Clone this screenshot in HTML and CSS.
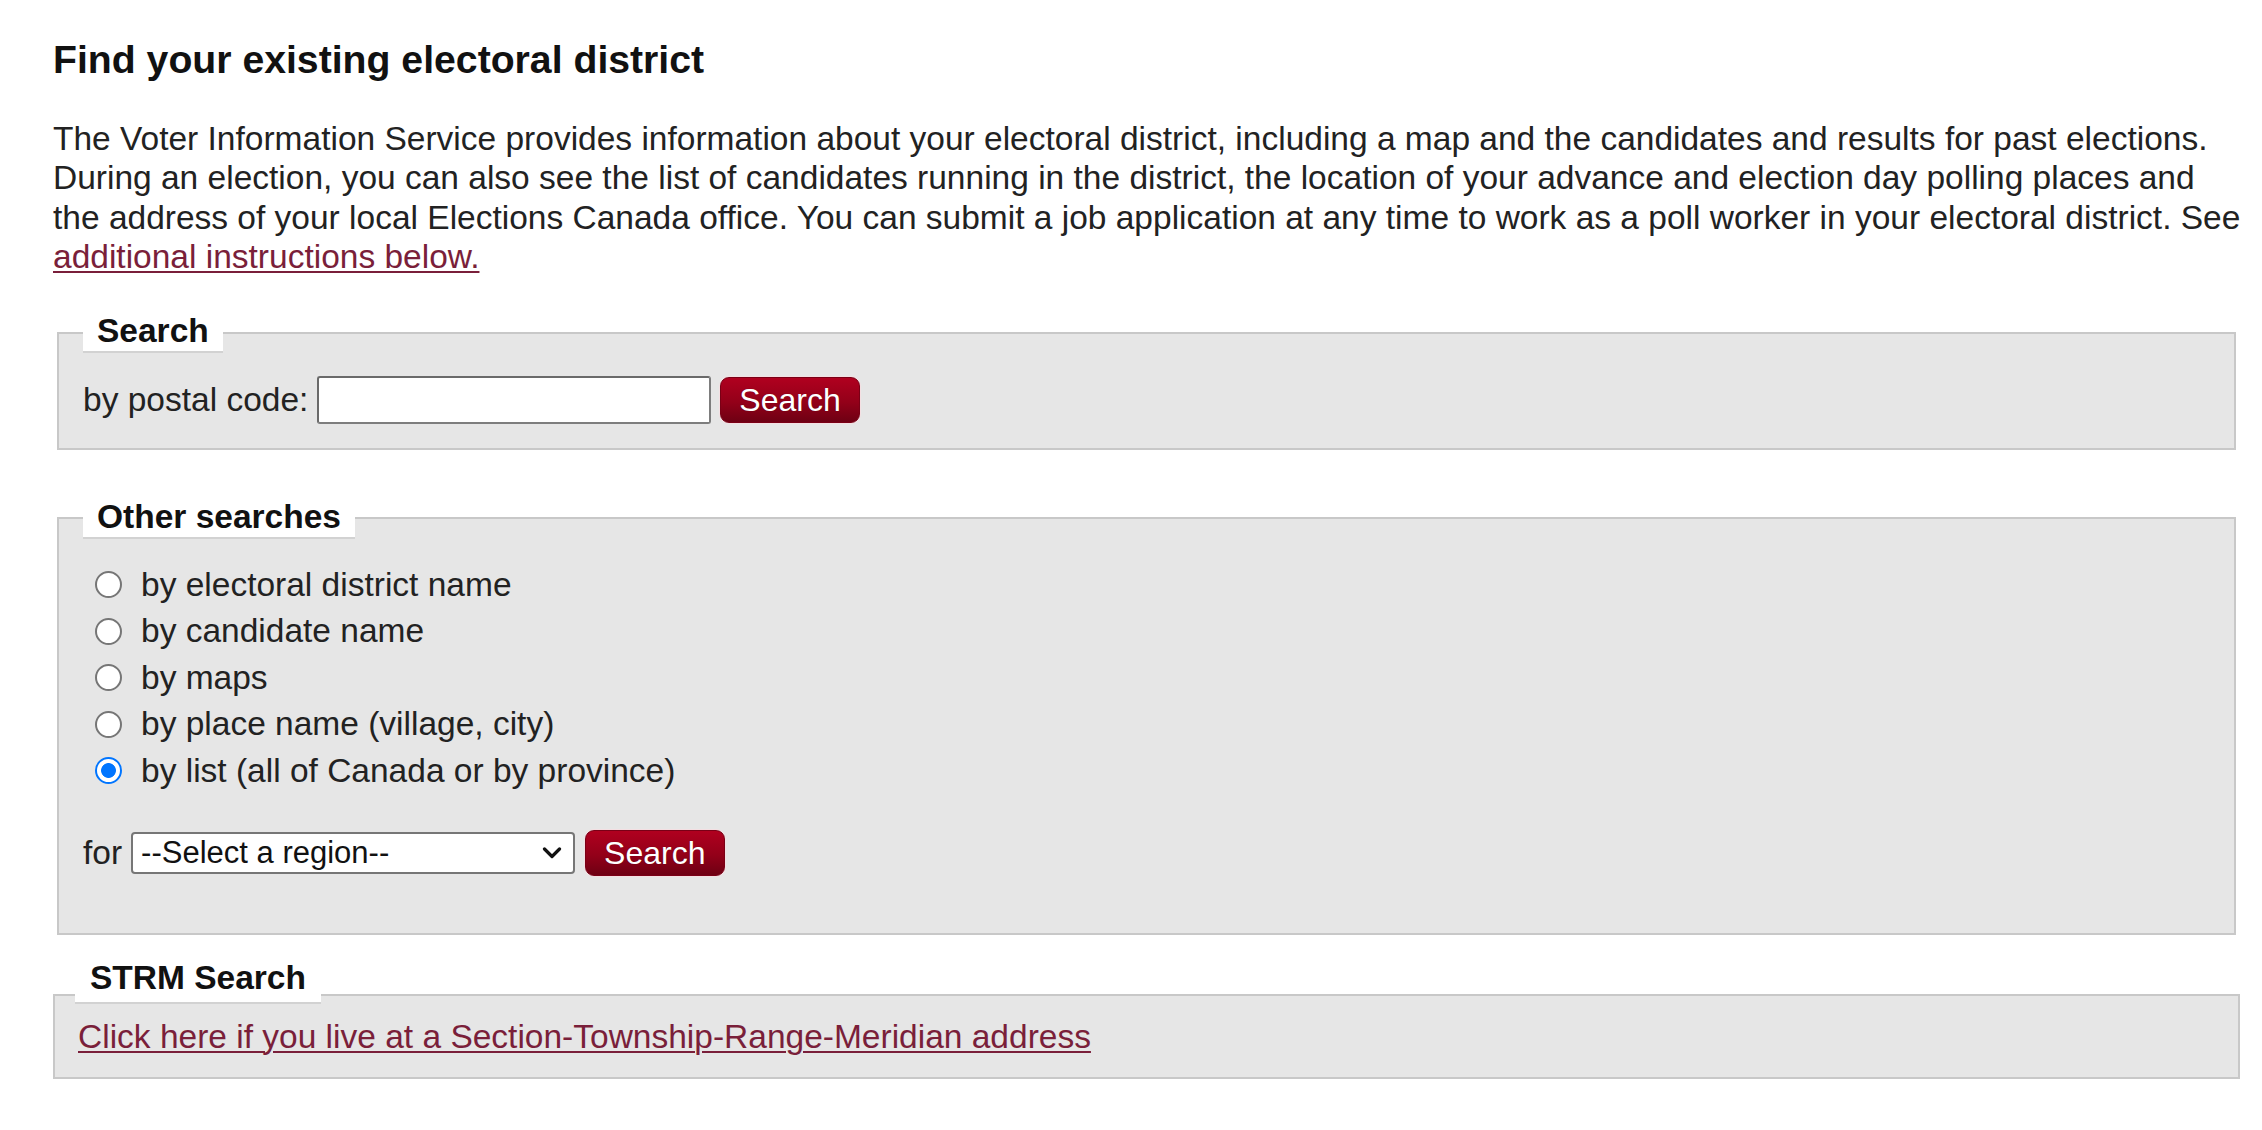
FILE: index.html
```html
<!DOCTYPE html>
<html lang="en">
<head>
<meta charset="utf-8">
<title>Find your existing electoral district</title>
<link rel="stylesheet" href="styles.css">
</head>
<body>
<main class="page">
  <h2 class="title">Find your existing electoral district</h2>
  <p class="intro">The Voter Information Service provides information about your electoral district, including a map and the candidates and results for past elections.<br>During an election, you can also see the list of candidates running in the district, the location of your advance and election day polling places and<br>the address of your local Elections Canada office. You can submit a job application at any time to work as a poll worker in your electoral district. See<br><a href="#instructions" class="link">additional instructions below.</a></p>

  <fieldset class="box box-search">
    <legend class="legend">Search</legend>
    <div class="row">
      <label class="row-label" for="postal">by postal code:</label>
      <input id="postal" class="text-input" type="text">
      <button class="btn" type="button">Search</button>
    </div>
  </fieldset>

  <fieldset class="box box-other">
    <legend class="legend">Other searches</legend>
    <ul class="options">
      <li class="option"><input class="radio" type="radio" name="type" id="r1"><label for="r1">by electoral district name</label></li>
      <li class="option"><input class="radio" type="radio" name="type" id="r2"><label for="r2">by candidate name</label></li>
      <li class="option"><input class="radio" type="radio" name="type" id="r3"><label for="r3">by maps</label></li>
      <li class="option"><input class="radio" type="radio" name="type" id="r4"><label for="r4">by place name (village, city)</label></li>
      <li class="option"><input class="radio" type="radio" name="type" id="r5" checked><label for="r5">by list (all of Canada or by province)</label></li>
    </ul>
    <div class="row">
      <label class="row-label-short" for="region">for</label>
      <span class="select-wrap">
        <select id="region" class="select"><option>--Select a region--</option></select>
        <svg class="chev" width="20" height="12" viewBox="0 0 20 12" aria-hidden="true"><path d="M2.5 2 L10 9.5 L17.5 2" fill="none" stroke="#111" stroke-width="3.2" stroke-linecap="round" stroke-linejoin="round"/></svg>
      </span>
      <button class="btn" type="button">Search</button>
    </div>
  </fieldset>

  <section class="strm">
    <h3 class="strm-title">STRM Search</h3>
    <div class="strm-body">
      <a href="#strm" class="link">Click here if you live at a Section-Township-Range-Meridian address</a>
    </div>
  </section>
</main>
</body>
</html>
```

FILE: styles.css
```css
html, body {
  margin: 0;
  background: #ffffff;
}

body {
  font-family: "Liberation Sans", Arial, sans-serif;
  font-size: 33.5px;
  color: #222222;
}

.page {
  padding: 37px 0 40px 53px;
}

.title {
  margin: 0;
  font-size: 39.2px;
  line-height: 45px;
  font-weight: bold;
  color: #111111;
}

.intro {
  margin: 37px 0 0;
  line-height: 39.3px;
}

.link {
  color: #7a1f3a;
  text-decoration: underline;
  text-decoration-thickness: 2px;
  text-underline-offset: 3px;
}

.box {
  margin: 36px 26px 0 4px;
  padding: 23px 24px 24px;
  border: 2px solid #c8c8c8;
  background: #e6e6e6;
  min-width: 0;
}

.box-other {
  margin-top: 47.5px;
  padding-bottom: 56px;
}

.legend {
  padding: 0 14px 1px;
  line-height: 38px;
  font-weight: bold;
  color: #111111;
  background: #ffffff;
  border-bottom: 2px solid #d2d2d2;
}

.row {
  display: flex;
  align-items: center;
  height: 48px;
}

.row-label {
  margin-right: 9px;
}

.row-label-short {
  margin-right: 9px;
}

.text-input {
  box-sizing: border-box;
  width: 394px;
  height: 48px;
  margin: 0 9px 0 0;
  padding: 0 8px;
  border: 2px solid #7d7d7d;
  border-top-color: #6a6a6a;
  border-left-color: #6a6a6a;
  border-radius: 3px;
  background: #ffffff;
  font: inherit;
}

.btn {
  box-sizing: border-box;
  height: 46px;
  padding: 0 18px;
  border: 1px solid #7a0016;
  border-radius: 9px;
  background: linear-gradient(#b0001f, #930019 55%, #6e0013);
  box-shadow: 0 0 0 1px #f4dfe2;
  color: #ffffff;
  font-family: "Liberation Sans", Arial, sans-serif;
  font-size: 32px;
  line-height: 1;
  text-shadow: 0 0 1px rgba(0, 0, 0, 0.35);
  cursor: pointer;
}

.options {
  list-style: none;
  margin: 0 0 34.5px;
  padding: 0;
}

.option {
  display: flex;
  align-items: center;
  height: 46.5px;
}

.radio {
  appearance: none;
  -webkit-appearance: none;
  box-sizing: border-box;
  flex: none;
  width: 27px;
  height: 27px;
  margin: 0 19px 0 12px;
  border: 2px solid #767676;
  border-radius: 50%;
  background: #ffffff;
}

.radio:checked {
  border-color: #0075ff;
  background: radial-gradient(circle, #0075ff 0 7px, #ffffff 7.8px);
}

.select-wrap {
  position: relative;
  display: block;
  margin-right: 10px;
}

.select {
  appearance: none;
  -webkit-appearance: none;
  box-sizing: border-box;
  display: block;
  width: 444px;
  height: 42px;
  margin: 0;
  padding: 0 40px 0 8px;
  border: 2px solid #767676;
  border-radius: 4px;
  background: #ffffff;
  color: #111111;
  font-family: "Liberation Sans", Arial, sans-serif;
  font-size: 31px;
}

.chev {
  position: absolute;
  right: 13px;
  top: 15px;
  pointer-events: none;
}

.strm {
  margin: 24px 22px 0 0;
}

.strm-title {
  position: relative;
  z-index: 1;
  width: fit-content;
  margin: 0 0 -10px 22px;
  padding: 0 15px 4.5px;
  font-size: 33.5px;
  line-height: 38.5px;
  font-weight: bold;
  color: #111111;
  background: #ffffff;
  border-bottom: 2px solid #d2d2d2;
}

.strm-body {
  padding: 22px 23px 21.5px;
  border: 2px solid #c8c8c8;
  background: #e6e6e6;
}
```
